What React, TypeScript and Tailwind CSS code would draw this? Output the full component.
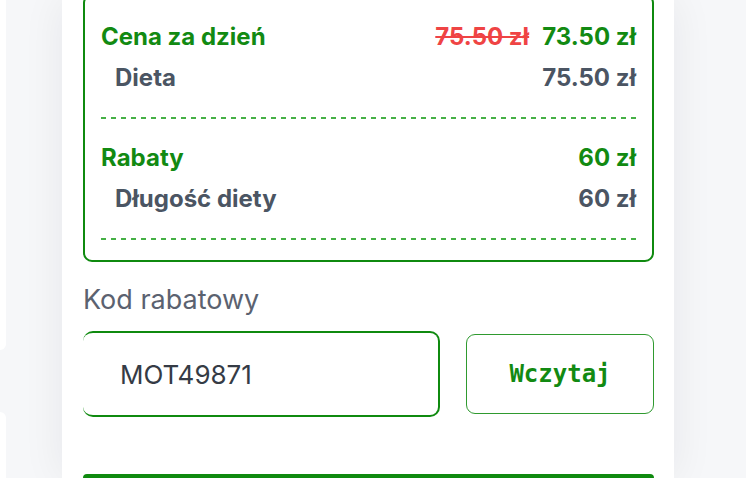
import React from 'react'

const green = 'text-[#128a12]'

function Row({ label, value, strong, old }: { label: string; value: string; strong?: boolean; old?: string }) {
  return (
    <div className={`flex h-[41px] items-center justify-between ${strong ? '' : 'pl-[14px]'}`}>
      <span className={`text-[24px] font-bold ${strong ? green : 'text-[#4b5563]'}`}>{label}</span>
      <span className="flex items-center gap-[13px]">
        {old && <span className="text-[24px] font-bold text-[#ef4444] line-through">{old}</span>}
        <span className={`text-[24px] font-bold ${strong ? green : 'text-[#4b5563]'}`}>{value}</span>
      </span>
    </div>
  )
}

function Dashes() {
  return <div className="h-[2px] w-full bg-[repeating-linear-gradient(90deg,#45b045_0_5px,transparent_5px_10px)]" />
}

export default function App() {
  return (
    <div
      className="flex h-[478px] w-[746px] overflow-hidden bg-[#f6f7f9]"
      style={{ fontFamily: 'Inter, "Noto Sans", sans-serif' }}
    >
      {/* neighbouring cards, only their edge shows */}
      <div className="flex w-[6px] flex-col gap-[62px]">
        <div className="h-[350px] rounded-br-[10px] bg-white" />
        <div className="flex-1 rounded-tr-[10px] bg-white" />
      </div>

      <div className="ml-[56px] flex w-[612px] flex-col bg-white pl-[21px] pr-[20px] shadow-[0_0_40px_rgba(15,23,42,0.07)]">
        <div className="-mt-[6px] rounded-[9px] border-2 border-[#0f8a0f] px-[16px] pt-5 pb-5">
          <Row label="Cena za dzień" value="73.50 zł" old="75.50 zł" strong />
          <Row label="Dieta" value="75.50 zł" />
          <div className="mt-[19px]">
            <Dashes />
          </div>
          <div className="mt-[18px]">
            <Row label="Rabaty" value="60 zł" strong />
            <Row label="Długość diety" value="60 zł" />
          </div>
          <div className="mt-[19px]">
            <Dashes />
          </div>
        </div>

        <label className="mt-[24px] text-[27px] leading-[28px] text-[#5b6270]">Kod rabatowy</label>

        <div className="mt-[17px] flex items-center gap-[26px]">
          <div className="flex h-[86px] w-[357px] items-center rounded-[10px] border-2 border-l-0 border-[#0f8a0f] pl-[37px]">
            <span className="text-[26px] text-[#353b45]">MOT49871</span>
          </div>
          <button
            className="flex h-[80px] flex-1 items-center justify-center rounded-[9px] border border-[#2f9a2f] bg-white text-[24px] font-bold text-[#128a12]"
            style={{ fontFamily: '"DejaVu Sans Mono", monospace' }}
          >
            Wczytaj
          </button>
        </div>

        <div className="mt-[57px] h-[40px] rounded-t-[8px] bg-[#0f8a0f]" />
      </div>
    </div>
  )
}
